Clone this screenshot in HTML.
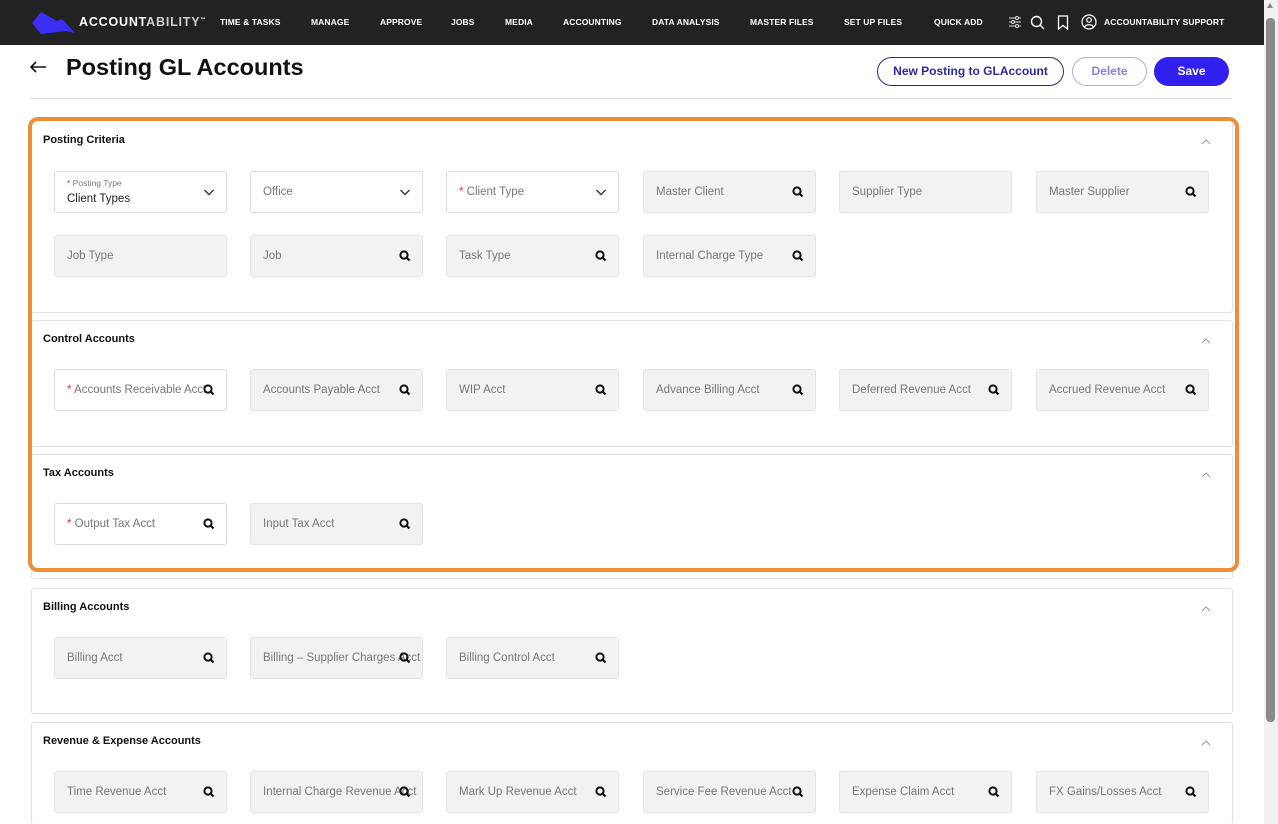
<!DOCTYPE html>
<html style="width:1278px;height:824px;overflow:hidden"><head><meta charset="utf-8"><style>
*{box-sizing:border-box;margin:0;padding:0}
body{width:1278px;height:824px;overflow:hidden;background:#fff;font-family:"Liberation Sans",sans-serif;position:relative}
.nav{position:absolute;left:0;top:0;width:1264px;height:45px;background:#222}
.nav .i{position:absolute;top:17px;color:#fff;font-size:8.5px;font-weight:bold;letter-spacing:.1px}
.abs{position:absolute}
.card{position:absolute;left:31px;width:1202px;border:1px solid #e2e2e2;border-radius:3px;background:#fff}
.st{position:absolute;left:43px;font-size:11px;font-weight:bold;color:#111}
.up{position:absolute;left:1201px;width:10px;height:6px}
.f{position:absolute;width:173px;height:42px;border:1px solid #e3e3e3;border-radius:3px;background:#f2f2f2;font-size:11.5px;color:#777}
.f.w{background:#fff;border-color:#dcdcdc}
.f span.t{position:absolute;left:12px;top:14px;white-space:nowrap;overflow:hidden;width:150px}
.f .r{color:#d33}
.f svg{position:absolute;left:148px;top:14px}
.btn{position:absolute;top:57px;height:29px;border-radius:15px;font-size:12px;font-weight:bold;text-align:center;line-height:27px}
</style></head><body>
<div class="nav">
<svg class="abs" style="left:30px;top:10px" width="48" height="26"><polygon points="2,13 11,2 27,11 32,9 45,23 36,21 11,24" fill="#3b2ff5"/></svg>
<div class="abs" style="left:79px;top:15px;color:#fff;font-size:12.5px;font-weight:bold;letter-spacing:0.8px">ACCOUNT<span style="color:#cfcfcf">ABILITY</span><sup style="font-size:5px">™</sup></div>
<div class="i" style="left:220px">TIME &amp; TASKS</div>
<div class="i" style="left:311px">MANAGE</div>
<div class="i" style="left:380px">APPROVE</div>
<div class="i" style="left:451px">JOBS</div>
<div class="i" style="left:505px">MEDIA</div>
<div class="i" style="left:563px">ACCOUNTING</div>
<div class="i" style="left:652px">DATA ANALYSIS</div>
<div class="i" style="left:750px">MASTER FILES</div>
<div class="i" style="left:844px">SET UP FILES</div>
<div class="i" style="left:934px">QUICK ADD</div>
<svg class="abs" style="left:1008px;top:15px" width="14" height="14" stroke="#ddd" fill="none"><path d="M1 3h12M1 7h12M1 11h12"/><circle cx="9" cy="3" r="1.5" fill="#222"/><circle cx="5" cy="7" r="1.5" fill="#222"/><circle cx="9" cy="11" r="1.5" fill="#222"/></svg>
<svg class="abs" style="left:1030px;top:15px" width="15" height="15" stroke="#fff" stroke-width="1.4" fill="none"><circle cx="6.5" cy="6.5" r="5"/><path d="M10 10l4 4"/></svg>
<svg class="abs" style="left:1057px;top:15px" width="12" height="15" stroke="#fff" stroke-width="1.3" fill="none"><path d="M1.5 1h9v13l-4.5-3.5L1.5 14z"/></svg>
<svg class="abs" style="left:1081px;top:14px" width="16" height="16" stroke="#fff" stroke-width="1.2" fill="none"><circle cx="8" cy="8" r="7"/><circle cx="8" cy="6" r="2.3"/><path d="M3.5 13c1.5-3 7.5-3 9 0"/></svg>
<div class="i" style="left:1104px">ACCOUNTABILITY SUPPORT</div>
</div>
<div class="abs" style="left:1264px;top:0;width:14px;height:824px;background:#f1f1f1"></div>
<div class="abs" style="left:1266px;top:18px;width:9px;height:704px;background:#8a8a8a;border-radius:4px"></div>
<div class="abs" style="left:1267px;top:3px;width:0;height:0;border-left:3.5px solid transparent;border-right:3.5px solid transparent;border-bottom:5px solid #888"></div>

<svg class="abs" style="left:29px;top:60px" width="18" height="14" stroke="#111" stroke-width="1.6" fill="none"><path d="M17 7H2M7 2L2 7l5 5"/></svg>
<div class="abs" style="left:66px;top:54px;font-size:23.5px;font-weight:bold;color:#111">Posting GL Accounts</div>
<div class="btn" style="left:877px;width:187px;border:1px solid #2d2a8a;color:#2a2aa0">New Posting to GLAccount</div>
<div class="btn" style="left:1072px;width:75px;border:1px solid #b3ace8;color:#8a82d8">Delete</div>
<div class="btn" style="left:1154px;width:75px;background:#3220ef;color:#fff;line-height:29px">Save</div>
<div class="abs" style="left:30px;top:98px;width:1202px;height:1px;background:#e2e2e2"></div>

<div class="card" style="top:120px;height:193px"></div>
<div class="card" style="top:320px;height:127px"></div>
<div class="card" style="top:454px;height:125px"></div>
<div class="card" style="top:588px;height:126px"></div>
<div class="card" style="top:722px;height:102px;border-bottom:none"></div>
<div class="abs" style="left:28px;top:117px;width:1211px;height:455px;border:4px solid #ef8d35;border-radius:10px"></div>

<div class="st" style="top:134px">Posting Criteria</div>
<div class="st" style="top:333px">Control Accounts</div>
<div class="st" style="top:467px">Tax Accounts</div>
<div class="st" style="top:601px">Billing Accounts</div>
<div class="st" style="top:735px">Revenue &amp; Expense Accounts</div>
<svg class="up" style="top:139px" viewBox="0 0 10 6" stroke="#999" fill="none"><path d="M1 5l4-4 4 4"/></svg>
<svg class="up" style="top:338px" viewBox="0 0 10 6" stroke="#999" fill="none"><path d="M1 5l4-4 4 4"/></svg>
<svg class="up" style="top:472px" viewBox="0 0 10 6" stroke="#999" fill="none"><path d="M1 5l4-4 4 4"/></svg>
<svg class="up" style="top:606px" viewBox="0 0 10 6" stroke="#999" fill="none"><path d="M1 5l4-4 4 4"/></svg>
<svg class="up" style="top:740px" viewBox="0 0 10 6" stroke="#999" fill="none"><path d="M1 5l4-4 4 4"/></svg>

<div class="f w" style="left:54px;top:171px"><span class="abs" style="left:12px;top:6px;font-size:8.5px;color:#777"><span class="r">*</span> Posting Type</span><span class="abs" style="left:12px;top:21px;font-size:11.5px;color:#222">Client Types</span><svg style="top:15px" width="12" height="10" stroke="#333" stroke-width="1.4" fill="none"><path d="M1.5 3l4.5 4.5 4.5-4.5"/></svg></div>
<div class="f w" style="left:250px;top:171px"><span class="t">Office</span><svg style="top:15px" width="12" height="10" stroke="#333" stroke-width="1.4" fill="none"><path d="M1.5 3l4.5 4.5 4.5-4.5"/></svg></div>
<div class="f w" style="left:446px;top:171px"><span class="t"><span class="r">*</span> Client Type</span><svg style="top:15px" width="12" height="10" stroke="#333" stroke-width="1.4" fill="none"><path d="M1.5 3l4.5 4.5 4.5-4.5"/></svg></div>
<div class="f" style="left:643px;top:171px"><span class="t">Master Client</span><svg width="12" height="12"><circle cx="5" cy="5" r="3.6" stroke="#111" stroke-width="2" fill="none"/><path d="M7.5 7.5l3 3" stroke="#111" stroke-width="2.2"/></svg></div>
<div class="f" style="left:839px;top:171px"><span class="t">Supplier Type</span></div>
<div class="f" style="left:1036px;top:171px"><span class="t">Master Supplier</span><svg width="12" height="12"><circle cx="5" cy="5" r="3.6" stroke="#111" stroke-width="2" fill="none"/><path d="M7.5 7.5l3 3" stroke="#111" stroke-width="2.2"/></svg></div>
<div class="f" style="left:54px;top:235px"><span class="t">Job Type</span></div>
<div class="f" style="left:250px;top:235px"><span class="t">Job</span><svg width="12" height="12"><circle cx="5" cy="5" r="3.6" stroke="#111" stroke-width="2" fill="none"/><path d="M7.5 7.5l3 3" stroke="#111" stroke-width="2.2"/></svg></div>
<div class="f" style="left:446px;top:235px"><span class="t">Task Type</span><svg width="12" height="12"><circle cx="5" cy="5" r="3.6" stroke="#111" stroke-width="2" fill="none"/><path d="M7.5 7.5l3 3" stroke="#111" stroke-width="2.2"/></svg></div>
<div class="f" style="left:643px;top:235px"><span class="t">Internal Charge Type</span><svg width="12" height="12"><circle cx="5" cy="5" r="3.6" stroke="#111" stroke-width="2" fill="none"/><path d="M7.5 7.5l3 3" stroke="#111" stroke-width="2.2"/></svg></div>

<div class="f w" style="left:54px;top:369px"><span class="t" style="width:140px"><span class="r">*</span> Accounts Receivable Acct</span><svg width="12" height="12"><circle cx="5" cy="5" r="3.6" stroke="#111" stroke-width="2" fill="none"/><path d="M7.5 7.5l3 3" stroke="#111" stroke-width="2.2"/></svg></div>
<div class="f" style="left:250px;top:369px"><span class="t">Accounts Payable Acct</span><svg width="12" height="12"><circle cx="5" cy="5" r="3.6" stroke="#111" stroke-width="2" fill="none"/><path d="M7.5 7.5l3 3" stroke="#111" stroke-width="2.2"/></svg></div>
<div class="f" style="left:446px;top:369px"><span class="t">WIP Acct</span><svg width="12" height="12"><circle cx="5" cy="5" r="3.6" stroke="#111" stroke-width="2" fill="none"/><path d="M7.5 7.5l3 3" stroke="#111" stroke-width="2.2"/></svg></div>
<div class="f" style="left:643px;top:369px"><span class="t">Advance Billing Acct</span><svg width="12" height="12"><circle cx="5" cy="5" r="3.6" stroke="#111" stroke-width="2" fill="none"/><path d="M7.5 7.5l3 3" stroke="#111" stroke-width="2.2"/></svg></div>
<div class="f" style="left:839px;top:369px"><span class="t">Deferred Revenue Acct</span><svg width="12" height="12"><circle cx="5" cy="5" r="3.6" stroke="#111" stroke-width="2" fill="none"/><path d="M7.5 7.5l3 3" stroke="#111" stroke-width="2.2"/></svg></div>
<div class="f" style="left:1036px;top:369px"><span class="t">Accrued Revenue Acct</span><svg width="12" height="12"><circle cx="5" cy="5" r="3.6" stroke="#111" stroke-width="2" fill="none"/><path d="M7.5 7.5l3 3" stroke="#111" stroke-width="2.2"/></svg></div>

<div class="f w" style="left:54px;top:503px"><span class="t"><span class="r">*</span> Output Tax Acct</span><svg width="12" height="12"><circle cx="5" cy="5" r="3.6" stroke="#111" stroke-width="2" fill="none"/><path d="M7.5 7.5l3 3" stroke="#111" stroke-width="2.2"/></svg></div>
<div class="f" style="left:250px;top:503px"><span class="t">Input Tax Acct</span><svg width="12" height="12"><circle cx="5" cy="5" r="3.6" stroke="#111" stroke-width="2" fill="none"/><path d="M7.5 7.5l3 3" stroke="#111" stroke-width="2.2"/></svg></div>

<div class="f" style="left:54px;top:637px"><span class="t">Billing Acct</span><svg width="12" height="12"><circle cx="5" cy="5" r="3.6" stroke="#111" stroke-width="2" fill="none"/><path d="M7.5 7.5l3 3" stroke="#111" stroke-width="2.2"/></svg></div>
<div class="f" style="left:250px;top:637px"><span class="t" style="width:158px">Billing – Supplier Charges Acct</span><svg width="12" height="12"><circle cx="5" cy="5" r="3.6" stroke="#111" stroke-width="2" fill="none"/><path d="M7.5 7.5l3 3" stroke="#111" stroke-width="2.2"/></svg></div>
<div class="f" style="left:446px;top:637px"><span class="t">Billing Control Acct</span><svg width="12" height="12"><circle cx="5" cy="5" r="3.6" stroke="#111" stroke-width="2" fill="none"/><path d="M7.5 7.5l3 3" stroke="#111" stroke-width="2.2"/></svg></div>

<div class="f" style="left:54px;top:771px"><span class="t">Time Revenue Acct</span><svg width="12" height="12"><circle cx="5" cy="5" r="3.6" stroke="#111" stroke-width="2" fill="none"/><path d="M7.5 7.5l3 3" stroke="#111" stroke-width="2.2"/></svg></div>
<div class="f" style="left:250px;top:771px"><span class="t" style="width:158px">Internal Charge Revenue Acct</span><svg width="12" height="12"><circle cx="5" cy="5" r="3.6" stroke="#111" stroke-width="2" fill="none"/><path d="M7.5 7.5l3 3" stroke="#111" stroke-width="2.2"/></svg></div>
<div class="f" style="left:446px;top:771px"><span class="t">Mark Up Revenue Acct</span><svg width="12" height="12"><circle cx="5" cy="5" r="3.6" stroke="#111" stroke-width="2" fill="none"/><path d="M7.5 7.5l3 3" stroke="#111" stroke-width="2.2"/></svg></div>
<div class="f" style="left:643px;top:771px"><span class="t" style="width:145px">Service Fee Revenue Acct</span><svg width="12" height="12"><circle cx="5" cy="5" r="3.6" stroke="#111" stroke-width="2" fill="none"/><path d="M7.5 7.5l3 3" stroke="#111" stroke-width="2.2"/></svg></div>
<div class="f" style="left:839px;top:771px"><span class="t">Expense Claim Acct</span><svg width="12" height="12"><circle cx="5" cy="5" r="3.6" stroke="#111" stroke-width="2" fill="none"/><path d="M7.5 7.5l3 3" stroke="#111" stroke-width="2.2"/></svg></div>
<div class="f" style="left:1036px;top:771px"><span class="t">FX Gains/Losses Acct</span><svg width="12" height="12"><circle cx="5" cy="5" r="3.6" stroke="#111" stroke-width="2" fill="none"/><path d="M7.5 7.5l3 3" stroke="#111" stroke-width="2.2"/></svg></div>
</body></html>
